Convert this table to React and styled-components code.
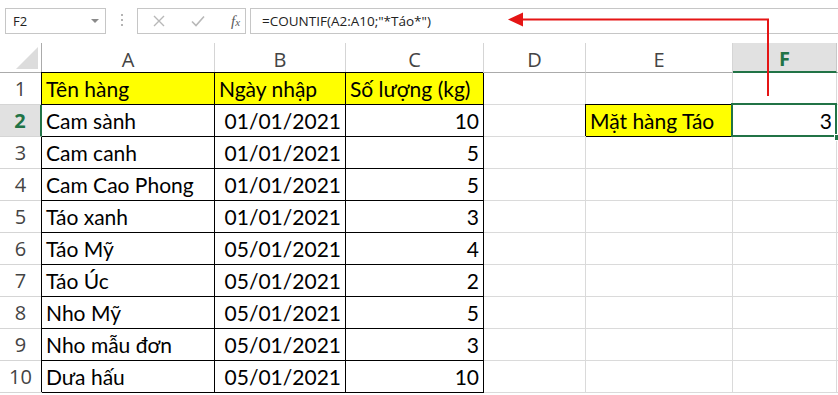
import React from 'react';
import styled, { createGlobalStyle } from 'styled-components';

const GlobalStyle = createGlobalStyle`
  body {
    margin: 0;
    background: #fff;
  }
`;

const GREEN = '#217346';
const GRID = '#dadada';

const Page = styled.div`
  position: relative;
  width: 838px;
  height: 395px;
  overflow: hidden;
  background: #fff;
`;

// thanh công thức phía trên
const FormulaBar = styled.div`
  display: flex;
  align-items: flex-start;
  height: 43px;
  padding: 8px 0 0 5px;
  box-sizing: border-box;
  font-family: 'Open Sans', 'Liberation Sans', sans-serif;
`;

const NameBox = styled.div`
  display: flex;
  align-items: center;
  justify-content: space-between;
  width: 101px;
  height: 26px;
  box-sizing: border-box;
  border: 1px solid #c6c6c6;
  padding: 0 6px 0 7px;
  font-size: 13px;
  color: #222;
`;

const Caret = styled.span`
  width: 0;
  height: 0;
  border-left: 4px solid transparent;
  border-right: 4px solid transparent;
  border-top: 4px solid #8a8a8a;
`;

const Dots = styled.div`
  display: flex;
  flex-direction: column;
  gap: 3px;
  margin: 6px 14px 0 15px;

  span {
    width: 2px;
    height: 2px;
    background: #b4b4b4;
  }
`;

const ButtonBox = styled.div`
  display: flex;
  align-items: center;
  width: 109px;
  height: 26px;
  box-sizing: border-box;
  border: 1px solid #c6c6c6;
  padding-left: 15px;
`;

const IconSlot = styled.span`
  display: flex;
  align-items: center;
  justify-content: center;
  width: ${p => p.$w}px;
`;

const Fx = styled.span`
  font-family: 'Liberation Serif', serif;
  font-style: italic;
  font-size: 15px;
  color: #5a5a5a;
  line-height: 1;

  small {
    font-size: 11px;
  }
`;

const FormulaInput = styled.div`
  display: flex;
  align-items: center;
  flex: 1;
  height: 26px;
  margin-left: 4px;
  box-sizing: border-box;
  border: 1px solid #c6c6c6;
  border-right: none;
  padding-left: 11px;
  font-size: 13.5px;
  color: #222;
  white-space: nowrap;
`;

// bảng tính
const Sheet = styled.div`
  display: grid;
  grid-template-columns: 42px 173px 131px 138px 102px 147px 104px 1fr;
  grid-template-rows: 30px repeat(10, 32px);
`;

const Corner = styled.div`
  display: flex;
  align-items: flex-end;
  justify-content: flex-end;
  padding: 0 3px 3px 0;
  border-right: 1px solid #ababab;
  border-bottom: 1px solid #ababab;
`;

const ColHead = styled.div`
  display: flex;
  align-items: center;
  justify-content: center;
  box-sizing: border-box;
  padding-top: 3px;
  background: ${p => (p.$active ? '#e1e1e1' : '#fff')};
  border-right: 1px solid ${p => (p.$active ? '#c8c8c8' : '#d5d5d5')};
  border-bottom: ${p => (p.$active ? `2px solid ${GREEN}` : '1px solid #ababab')};
  font-family: 'Open Sans', 'Liberation Sans', sans-serif;
  font-size: 20px;
  font-weight: ${p => (p.$active ? 700 : 400)};
  color: ${p => (p.$active ? GREEN : '#444')};
`;

const RowHead = styled.div`
  position: relative;
  z-index: ${p => (p.$active ? 1 : 'auto')};
  display: flex;
  align-items: center;
  justify-content: center;
  box-sizing: border-box;
  background: ${p => (p.$active ? '#e1e1e1' : '#fff')};
  border-right: ${p => (p.$active ? `2px solid ${GREEN}` : '1px solid #ababab')};
  border-bottom: 1px solid #d5d5d5;
  font-family: 'Open Sans', 'Liberation Sans', sans-serif;
  font-size: 20px;
  font-weight: ${p => (p.$active ? 700 : 400)};
  color: ${p => (p.$active ? GREEN : '#444')};
`;

const Cell = styled.div`
  position: relative;
  display: flex;
  align-items: flex-end;
  justify-content: ${p => (p.$align === 'right' ? 'flex-end' : 'flex-start')};
  box-sizing: border-box;
  padding: 0 4px 2px 4px;
  background: ${p => p.$fill || 'transparent'};
  border-right: 1px solid ${p => (p.$boxed ? '#000' : GRID)};
  border-bottom: 1px solid ${p => (p.$boxed ? '#000' : GRID)};
  box-shadow: ${p => (p.$boxed ? '-1px -1px 0 #000' : 'none')};
  font-family: Lato, 'Liberation Sans', sans-serif;
  font-size: 21px;
  line-height: 26px;
  color: #000;
  white-space: nowrap;

  ${p =>
    p.$selected &&
    `
    &::after {
      content: '';
      position: absolute;
      top: -2px;
      left: -2px;
      right: -1px;
      bottom: -1px;
      border: 2px solid ${GREEN};
      z-index: 2;
    }
    &::before {
      content: '';
      position: absolute;
      right: -5px;
      bottom: -5px;
      width: 5px;
      height: 5px;
      background: ${GREEN};
      border: 1px solid #fff;
      z-index: 3;
    }
  `}
`;

const Arrow = styled.svg`
  position: absolute;
  top: 0;
  left: 0;
  pointer-events: none;
  z-index: 5;
`;

const columns = ['A', 'B', 'C', 'D', 'E', 'F'];

const rows = [
  ['Tên hàng', 'Ngày nhập', 'Số lượng (kg)'],
  ['Cam sành', '01/01/2021', 10],
  ['Cam canh', '01/01/2021', 5],
  ['Cam Cao Phong', '01/01/2021', 5],
  ['Táo xanh', '01/01/2021', 3],
  ['Táo Mỹ', '05/01/2021', 4],
  ['Táo Úc', '05/01/2021', 2],
  ['Nho Mỹ', '05/01/2021', 5],
  ['Nho mẫu đơn', '05/01/2021', 3],
  ['Dưa hấu', '05/01/2021', 10],
];

const SheetRow = ({ index, data }) => {
  const head = index === 0;
  const active = index === 1;
  return (
    <>
      <RowHead $active={active}>{index + 1}</RowHead>
      <Cell $boxed $fill={head ? '#ffff00' : undefined}>{data[0]}</Cell>
      <Cell $boxed $fill={head ? '#ffff00' : undefined} $align={head ? 'left' : 'right'}>
        {data[1]}
      </Cell>
      <Cell $boxed $fill={head ? '#ffff00' : undefined} $align={head ? 'left' : 'right'}>
        {data[2]}
      </Cell>
      <Cell />
      {active ? <Cell $boxed $fill="#ffff00">Mặt hàng Táo</Cell> : <Cell />}
      {active ? <Cell $align="right" $selected>3</Cell> : <Cell />}
      <Cell />
    </>
  );
};

const App = () => {
  return (
    <Page>
      <GlobalStyle />
      <FormulaBar>
        <NameBox>
          F2
          <Caret />
        </NameBox>
        <Dots>
          <span />
          <span />
          <span />
        </Dots>
        <ButtonBox>
          <IconSlot $w={12}>
            <svg width="12" height="12" viewBox="0 0 12 12">
              <path d="M1 1L11 11M11 1L1 11" stroke="#b8b8b8" strokeWidth="1.4" fill="none" />
            </svg>
          </IconSlot>
          <IconSlot $w={66}>
            <svg width="14" height="12" viewBox="0 0 14 12">
              <path d="M1 6.5L5 10.5L13 1.5" stroke="#b8b8b8" strokeWidth="1.6" fill="none" />
            </svg>
          </IconSlot>
          <Fx>
            f<small>x</small>
          </Fx>
        </ButtonBox>
        <FormulaInput>=COUNTIF(A2:A10;"*Táo*")</FormulaInput>
      </FormulaBar>

      <Sheet>
        <Corner>
          <svg width="22" height="22" viewBox="0 0 22 22">
            <polygon points="0,22 22,22 22,0" fill="#dcdcdc" />
          </svg>
        </Corner>
        {columns.map(c => (
          <ColHead key={c} $active={c === 'F'}>
            {c}
          </ColHead>
        ))}
        <ColHead />
        {rows.map((r, i) => (
          <SheetRow key={i} index={i} data={r} />
        ))}
      </Sheet>

      <Arrow width="838" height="395" viewBox="0 0 838 395">
        <path d="M520 19.5H768V96" stroke="#e51515" strokeWidth="2" fill="none" />
        <polygon points="508,19.5 523,12.5 523,26.5" fill="#e51515" />
      </Arrow>
    </Page>
  );
};

export default App;
